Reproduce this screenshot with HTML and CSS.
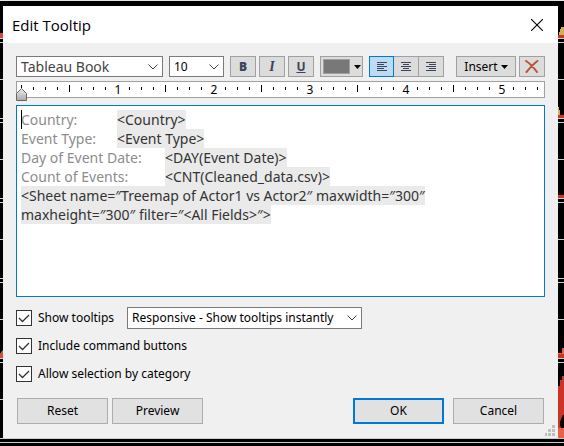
FILE: index.html
```html
<!DOCTYPE html>
<html lang="en">
<head>
<meta charset="utf-8">
<title>Edit Tooltip</title>
<link rel="stylesheet" href="styles.css">
</head>
<body>
<svg class="marks marks-left" width="3" height="446" viewBox="0 0 3 446" aria-hidden="true">
  <path fill="#d94835" d="M0 33h3v5H0zM0 353h3v5H0z"/>
  <path fill="#8a7a3c" d="M1 352l2-2v3H1z"/>
</svg>
<svg class="marks marks-right" width="6" height="446" viewBox="0 0 6 446" aria-hidden="true">
  <path fill="#d0b055" d="M1 35v-3h1v-3h1v-2h3v8zM0 115v-8h1v3h1v5z"/>
  <path fill="#cc3428" d="M0 35h6v3H0zM0 115h6v3H0zM0 195h6v3H0zM0 353h6v5H0zM0 438v-52h2v-6h2v-4h2v38l-3 10v14z"/>
  <path fill="#e8604a" d="M0 353h4v-5h2v6H0zM0 428h6v10H0z"/>
  <path fill="#000" d="M2 427v-5l2-5 1-2h1v13H4l-1-2z"/>
</svg>

<main class="dialog">
  <header class="titlebar">
    <h1 class="title">Edit Tooltip</h1>
    <button class="close" type="button" aria-label="Close">
      <svg width="12" height="12" viewBox="0 0 12 12"><path d="M0 0l12 12M12 0L0 12" stroke="#000" stroke-width="1.1"/></svg>
    </button>
  </header>

  <form class="content">
    <div class="toolbar">
      <div class="combo font-name">
        <select aria-label="Font"><option>Tableau Book</option></select>
        <svg class="chevron" width="10" height="6" viewBox="0 0 10 6"><path d="M.5.5L5 5 9.500.5"/></svg>
      </div>
      <div class="combo font-size">
        <select aria-label="Font size"><option>10</option></select>
        <svg class="chevron" width="10" height="6" viewBox="0 0 10 6"><path d="M.5.5L5 5 9.500.5"/></svg>
      </div>
      <div class="styles">
        <button class="tool" type="button" aria-label="Bold"><b>B</b></button>
        <button class="tool" type="button" aria-label="Italic"><i>I</i></button>
        <button class="tool" type="button" aria-label="Underline"><u>U</u></button>
      </div>
      <button class="tool color" type="button" aria-label="Text color">
        <span class="swatch"></span>
        <svg width="7" height="4" viewBox="0 0 7 4"><path d="M0 0h7L3.500 4z"/></svg>
      </button>
      <div class="aligns">
        <button class="tool selected" type="button" aria-label="Align left">
          <svg width="10" height="9" viewBox="0 0 10 9" shape-rendering="crispEdges"><path d="M0 0h10v1H0zM0 2h7v1H0zM0 4h10v1H0zM0 6h7v1H0zM0 8h10v1H0z"/></svg>
        </button>
        <button class="tool" type="button" aria-label="Align center">
          <svg width="10" height="9" viewBox="0 0 10 9" shape-rendering="crispEdges"><path d="M0 0h10v1H0zM2 2h6v1H2zM0 4h10v1H0zM2 6h6v1H2zM0 8h10v1H0z"/></svg>
        </button>
        <button class="tool" type="button" aria-label="Align right">
          <svg width="10" height="9" viewBox="0 0 10 9" shape-rendering="crispEdges"><path d="M0 0h10v1H0zM3 2h7v1H3zM0 4h10v1H0zM3 6h7v1H3zM0 8h10v1H0z"/></svg>
        </button>
      </div>
      <button class="tool insert" type="button">Insert
        <svg width="7" height="4" viewBox="0 0 7 4"><path d="M0 0h7L3.500 4z"/></svg>
      </button>
      <button class="tool clear" type="button" aria-label="Clear">
        <svg width="14" height="13" viewBox="0 0 14 13"><path d="M1 1C5 3.500 9 8 12 12M12.500 1C8 4 5 8 1.500 12" fill="none" stroke="#b9533a" stroke-width="2" stroke-linecap="round"/></svg>
      </button>
    </div>

    <div class="ruler">
      <svg class="ticks" aria-hidden="true" shape-rendering="crispEdges">
        <defs>
          <pattern id="inch" x="4" y="0" width="96" height="15" patternUnits="userSpaceOnUse">
            <path d="M12 5h1v3h-1zM24 5h1v3h-1zM36 5h1v3h-1zM48 3h1v7h-1zM60 5h1v3h-1zM72 5h1v3h-1zM84 5h1v3h-1z"/>
          </pattern>
        </defs>
        <rect width="100%" height="15" fill="url(#inch)"/>
      </svg>
      <ol class="inches"><li>1</li><li>2</li><li>3</li><li>4</li><li>5</li></ol>
      <svg class="indent" width="11" height="16" viewBox="0 0 11 16">
        <defs><linearGradient id="metal" x2="0" y2="1"><stop stop-color="#eee"/><stop offset="1" stop-color="#aaa"/></linearGradient></defs>
        <path d="M5 0h1v3H5z"/>
        <path d="M.5 15.500V8.500L5.500 3.500l5 5v7z" fill="url(#metal)" stroke="#666"/>
      </svg>
    </div>

    <div class="editor" role="textbox" aria-multiline="true" aria-label="Tooltip text" contenteditable="true" spellcheck="false"><span class="caret"></span>Country:&#9;<mark>&lt;Country&gt;</mark>
Event Type:&#9;<mark>&lt;Event Type&gt;</mark>
Day of Event Date:&#9;<mark>&lt;DAY(Event Date)&gt;</mark>
Count of Events:&#9;<mark>&lt;CNT(Cleaned_data.csv)&gt;</mark>
<mark>&lt;Sheet name=″Treemap of Actor1 vs Actor2″ maxwidth=″300″
maxheight=″300″ filter=″&lt;All Fields&gt;″&gt;</mark></div>

    <div class="options">
      <div class="option">
        <label class="check"><input type="checkbox" checked>Show tooltips</label>
        <div class="combo mode">
          <select aria-label="Tooltip mode"><option>Responsive - Show tooltips instantly</option></select>
          <svg class="chevron" width="10" height="6" viewBox="0 0 10 6"><path d="M.5.5L5 5 9.500.5"/></svg>
        </div>
      </div>
      <div class="option"><label class="check"><input type="checkbox" checked>Include command buttons</label></div>
      <div class="option"><label class="check"><input type="checkbox" checked>Allow selection by category</label></div>
    </div>

    <div class="actions">
      <button class="action" type="button">Reset</button>
      <button class="action" type="button">Preview</button>
      <button class="action primary" type="submit">OK</button>
      <button class="action" type="button">Cancel</button>
    </div>
  </form>
  <svg class="grip" width="10" height="11" viewBox="0 0 10 11" shape-rendering="crispEdges" aria-hidden="true">
    <path fill="#bfbfbf" d="M7 0h3v3H7zM3 4h3v3H3zM7 4h3v3H7zM0 8h2v3H0zM3 8h3v3H3zM7 8h3v3H7z"/>
  </svg>
</main>
</body>
</html>
```

FILE: styles.css
```css
* {
  box-sizing: border-box;
}

body {
  margin: 0;
  min-height: 100vh;
  padding: 5px 6px 7px 3px;
  position: relative;
  overflow: hidden;
  font: 12px/16px "Noto Sans", "Open Sans", sans-serif;
  color: #000;
  border-top: 1px solid #dfe8e4;
  background: #000 repeating-linear-gradient(
    #000 0, #000 1px, #000 38px, #ccc 38px 39px, #000 39px 42px, #ccc 42px 43px, #000 43px 79px, #ccc 79px 80px);
}

button, select, input {
  font: inherit;
  color: inherit;
  margin: 0;
}

.marks {
  position: absolute;
  top: -1px;
}

.marks-left { left: 0; }
.marks-right { right: 0; }

.dialog {
  position: relative;
  background: #f0f0f0;
}

.titlebar {
  display: flex;
  align-items: center;
  justify-content: space-between;
  height: 37px;
  padding: 0 15px 0 9px;
  background: #fff;
}

.title {
  margin: 0;
  font: 15px/20px "Open Sans", "Noto Sans", sans-serif;
}

.close {
  display: flex;
  padding: 0;
  border: 0;
  background: none;
}

.content {
  padding: 13px 13px 14px;
}

.toolbar {
  display: flex;
  gap: 6px;
  height: 21px;
}

.combo {
  position: relative;
  border: 1px solid #7a7a7a;
  background: #fff;
}

.combo select {
  display: block;
  appearance: none;
  width: 100%;
  height: 100%;
  padding: 0 20px 0 4px;
  border: 0;
  background: none;
}

.chevron {
  position: absolute;
  right: 4px;
  top: calc(50% - 3px);
  fill: none;
  stroke: #444;
  pointer-events: none;
}

.font-name { width: 147px; color: #444; }
.font-name select { font-size: 14px; }
.font-size { width: 55px; }

.styles {
  display: flex;
  gap: 3px;
}

.tool {
  display: flex;
  align-items: center;
  justify-content: center;
  width: 26px;
  padding: 0;
  border: 1px solid #a0a0a0;
  background: #dcdcdc;
}

.styles .tool {
  color: #3b4559;
  font-weight: bold;
}

.styles i {
  font-family: "Liberation Serif", serif;
  font-size: 14px;
}

.color {
  width: 43px;
  gap: 4px;
}

.swatch {
  width: 27px;
  height: 15px;
  background: #787878;
  border: 1px solid #a0a0a0;
}

.aligns {
  display: flex;
}

.aligns .tool {
  fill: #3b4559;
  border-left-width: 0;
  width: 25px;
}

.aligns .selected {
  border: 1px solid #0078d7;
  background: #bcdcf4;
}

.insert {
  width: 60px;
  gap: 3px;
  margin-left: auto;
}

.clear {
  margin-left: -3px;
}

.ruler {
  position: relative;
  height: 17px;
  margin-top: 4px;
  border: 1px solid #a0a0a0;
  background: #fff;
}

.ticks {
  position: absolute;
  inset: 0;
  width: 100%;
  height: 15px;
}

.inches {
  display: flex;
  margin: 0;
  padding: 0 0 0 53px;
  list-style: none;
}

.inches li {
  flex: none;
  width: 96px;
  text-align: center;
}

.inches li:last-child {
  width: 90px;
  padding-left: 6px;
}

.indent {
  position: absolute;
  left: -1px;
  top: 3px;
}

.editor {
  position: relative;
  height: 192px;
  margin-top: 7px;
  padding: 4px;
  border: 1px solid #0078d7;
  outline: 0;
  background: #fff;
  font-size: 14px;
  line-height: 19px;
  white-space: pre-wrap;
  tab-size: 48px;
  color: #8c8c8c;
}

.editor mark {
  color: #333;
  background: #eaeaea;
}

.caret {
  position: absolute;
  width: 1px;
  height: 19px;
  background: #000;
}

.options {
  display: grid;
  gap: 6px;
  margin-top: 10px;
}

.option {
  display: flex;
  align-items: center;
  height: 22px;
}

.check {
  display: flex;
  align-items: center;
  gap: 6px;
}

.check input {
  appearance: none;
  width: 16px;
  height: 16px;
  border: 1px solid #333;
  background: #fff url("data:image/svg+xml,%3Csvg xmlns='http://www.w3.org/2000/svg' viewBox='0 0 14 14'%3E%3Cpath d='M2 7l3.500 3.500L12 4' fill='none' stroke='%23333' stroke-width='1.300'/%3E%3C/svg%3E");
}

.mode {
  width: 235px;
  height: 22px;
  margin-left: 13px;
}

.actions {
  display: flex;
  gap: 4px;
  margin-top: 13px;
  padding: 0 1px;
}

.action {
  width: 91px;
  height: 26px;
  padding: 0;
  border: 1px solid #adadad;
  background: #e1e1e1;
}

.primary {
  margin-left: auto;
  margin-right: 5px;
  border: 2px solid #0078d7;
}

.grip {
  position: absolute;
  right: 3px;
  bottom: 2px;
}
```
